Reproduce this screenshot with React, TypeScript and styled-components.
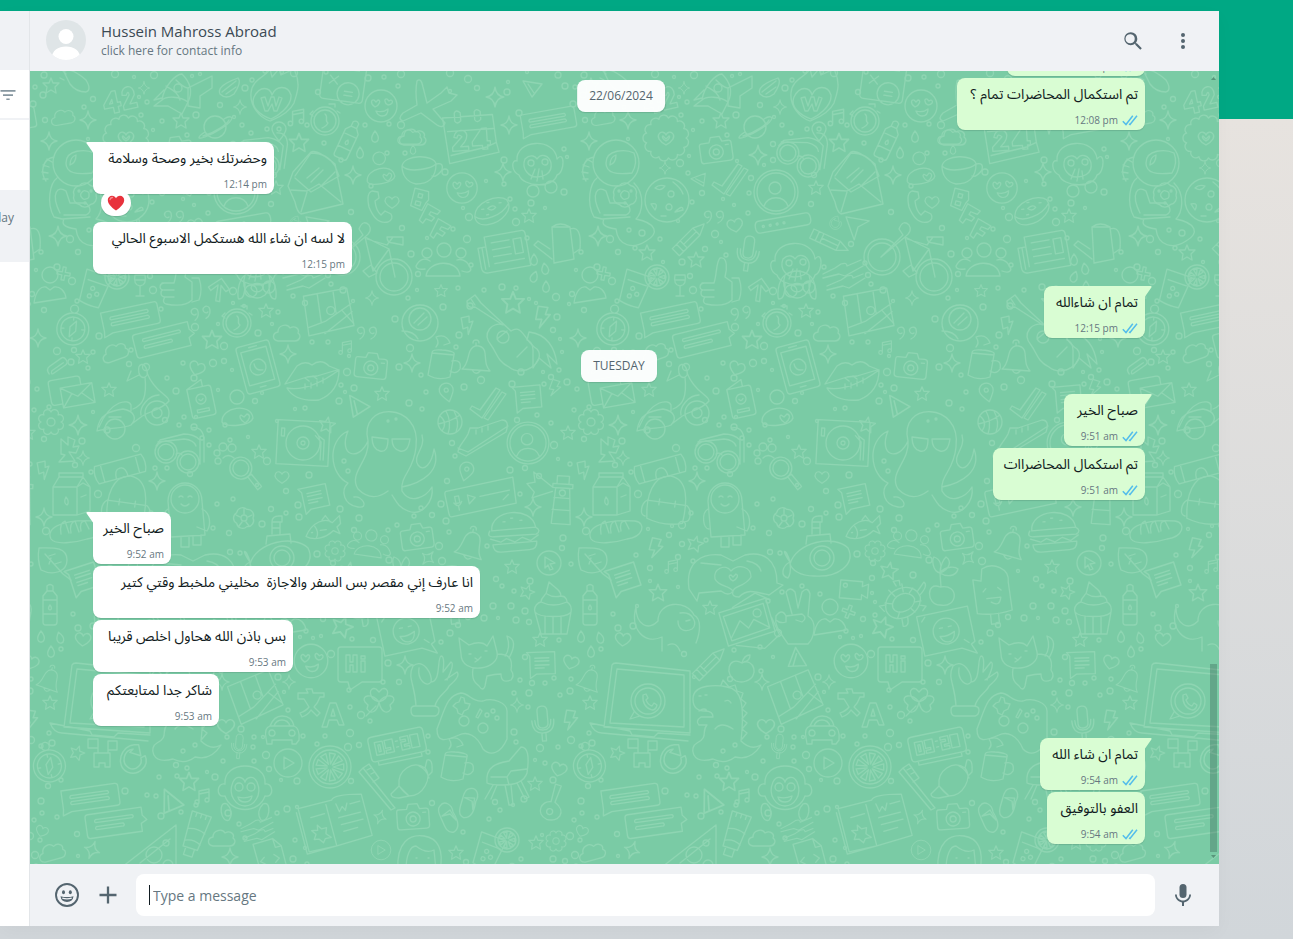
import React from "react";
import styled, { createGlobalStyle } from "styled-components";

/* ---------- wallpaper doodles ---------- */

const circle = (x: number, y: number, r: number) =>
  `M${x - r} ${y}a${r} ${r} 0 1 0 ${2 * r} 0a${r} ${r} 0 1 0 ${-2 * r} 0`;

const rays = (n: number, a: number, b: number) =>
  Array.from({ length: n }, (_, i) => {
    const t = (i * 2 * Math.PI) / n;
    const w = 0.22;
    const p = (r: number, o: number) =>
      `${(r * Math.cos(t + o)).toFixed(1)} ${(r * Math.sin(t + o)).toFixed(1)}`;
    return `M${p(a, 0)}L${p(b, -w)}L${p(b, w)}Z`;
  }).join("");

const scallop = (n: number, r: number, bump: number) => {
  const p = (i: number) => {
    const t = (i * 2 * Math.PI) / n;
    return `${(r * Math.cos(t)).toFixed(1)} ${(r * Math.sin(t)).toFixed(1)}`;
  };
  let d = `M${p(0)}`;
  for (let i = 1; i <= n; i++) d += `A${bump} ${bump} 0 0 1 ${p(i)}`;
  return d + "Z";
};

const shapes: Record<string, { r: number; d: string }> = {
  star: { r: 9, d: "M0-8L2-3L8-3L4 1L5 7L0 4L-5 7L-4 1L-8-3L-2-3Z" },
  spark: { r: 9, d: "M0-9Q1-1 8 0Q1 1 0 9Q-1 1-8 0Q-1-1 0-9Z" },
  plus: { r: 7, d: "M-1-7h3v5h5v3h-5v5h-3v-5h-5v-3h5Z" },
  heart: { r: 8, d: "M0 7C-7 3-9-1-7-4C-5-7-1-6 0-3C1-6 5-7 7-4C9-1 7 3 0 7Z" },
  cloud: { r: 13, d: "M-9 8C-15 7-15 0-9-1C-9-8 0-10 3-5C8-8 13-4 11 0C15 3 12 8 8 8Z" },
  drop: { r: 5, d: "M0-6C4-1 4 1 3 3C2 6-2 6-3 3C-4 1-3-2 0-6Z" },
  bolt: { r: 9, d: "M-4-9L4-8L2-2L6-2L-3 9L-1 2L-6 2Z" },
  pin: { r: 8, d: "M0 9C-5 3-7 0-7-3A7 7 0 0 1 7-3C7 0 5 3 0 9Z" + circle(0, -3, 2) },
  music: { r: 8, d: "M-4 5V-6L6-8V3M-4-3L6-5" + circle(-6, 5, 2) + circle(4, 3, 2) },
  quotes: { r: 11, d: "M-8 6C-4 4-3-1-4-4C-6-8-12-5-10-1C-8 2-6 0-6 0M3 6C8 4 9-1 8-4C6-8 0-5 2-1C4 2 6 0 6 0" },
  slice: { r: 10, d: "M-9-7L10-4L0 9ZM-4-4L2 5" },
  arrow: { r: 11, d: "M-10-1L1-12L11-3L8 0L2-5L4 11L0 11L-1-5L-7 2Z" },
  gear: { r: 12, d: scallop(8, 10, 3) + circle(0, 0, 4) },
  badge: { r: 23, d: scallop(13, 20, 5) + "M0 7C-7 3-9-1-7-4C-5-7-1-6 0-3C1-6 5-7 7-4C9-1 7 3 0 7ZM0 3C-4 1-4-2-3-2L0 1L3-2C4-2 4 1 0 3Z" },
  flower: { r: 17, d: scallop(5, 9, 6) + circle(0, 0, 3) + "M0-9V-4M8-3L4-1M5 8L2 4M-5 8L-2 4M-8-3L-4-1" },
  clover: { r: 18, d: "M0 0C-12-4-10-16-3-13L0-10L3-13C10-16 12-4 0 0C8-10 18-6 14 0L11 3L12 7C8 13 2 10 0 0C-2 10-8 13-12 7L-11 3L-14 0C-18-6-8-10 0 0M-3 4L-13 14" },
  citrus: { r: 23, d: circle(0, 0, 21) + circle(0, 0, 17) + rays(9, 3, 14) },
  lemon: { r: 14, d: circle(0, 0, 12) + circle(0, 0, 9) + rays(7, 2, 8) },
  emoji: { r: 18, d: circle(0, 0, 16) + "M-6 1C-11-2-10-7-7-6L-5-4L-3-6C0-6-1-1-6 1ZM7-1C3-3 3-8 6-7L8-5L10-6C13-5 11-1 7-1ZM-5 5Q2 7 7 3Q7 10 1 10Q-3 10-5 5Z" },
  profile: { r: 24, d: circle(0, 0, 22) + circle(0, 0, 19) + circle(-1, -4, 6) + "M-12 14C-8 3 8 3 12 14" },
  play: { r: 16, d: circle(0, 0, 14) + "M-4-6L6 0L-4 6Z" },
  cursor: { r: 14, d: circle(0, 0, 12) + "M-4-6L6 0L1 1L4 6L1 7L-1 2L-4 5Z" },
  ball: { r: 14, d: circle(0, 0, 12) + "M-12 2Q0 0 10-7M-4-11Q2 0-2 12M4-11Q10 0 6 10M-10-6Q-2 0-8 9" },
  dogface: { r: 22, d: "M-12-10Q0-18 12-10Q16 2 8 10Q0 16-8 10Q-16 2-12-10ZM-12-10C-20-4-20 14-18 14C-12 14-12 4-12-2M12-10C20-4 20 14 18 14C12 14 12 4 12-2M-6 3C-5-3 5-3 6 3C4 8-4 8-6 3Z" },
  compass: { r: 18, d: circle(0, 2, 16) + circle(0, 2, 12) + circle(0, -18, 4) + "M3-6L3 4L-3 10L-3 0ZM0-10V-7M0 14V11M-12 2H-9M12 2H9" },
  watch: { r: 17, d: circle(0, 0, 14) + circle(0, 0, 11) + "M0-7C4-4-1 0 3 2C1 6-1 6-3 7M-12-10L-15-7L-12-5M12-10L15-8M4-17h6v3" },
  chat: { r: 30, d: "M-28-10H26Q29-10 29-7V9Q29 12 26 12H-20L-29 15L-28 9ZM-19-4H18Q20-2 18-1H-19Q-21-2-19-4ZM-19 2H18Q20 4 18 5H-19Q-21 4-19 2Z" },
  chat2: { r: 30, d: "M28-12H-26Q-29-12-29-9V9Q-29 12-26 12H26L26 4L32 1L28-4ZM-19-6H18Q20-4 18-3H-19Q-21-4-19-6ZM-19 1H8Q10 3 8 4H-19Q-21 3-19 1Z" },
  note: { r: 16, d: "M-15-12L13-12V10L-6 10L-12 14L-12-8ZM-7-6H7M-7-3H7M-7 1H7M-7 4H2" },
  camera: { r: 18, d: "M-14-8H-6L-4-13H5L7-8H13Q16-8 16-5V9Q16 12 13 12H-13Q-16 12-16 9V-5Q-16-8-14-8Z" + circle(0, 2, 7) + circle(0, 2, 3) + "M10-4H13" },
  video: { r: 16, d: "M-14-9H8V-4L14-7V7L8 4V9H-14Z" + circle(-9, -4, 2) },
  pencil: { r: 18, d: "M-20-5H9L20 0L9 5H-20ZM-14-5V5M-9-5V5M9-5V5M-9 0H9" },
  mic: { r: 16, d: "M-5-12Q-5-17 0-17Q5-17 5-12V0Q5 5 0 5Q-5 5-5 0ZM-11-3Q-11 10 0 10Q11 10 11-3M-8-3Q-8 7 0 7M8-3Q8 7 0 7M-2 10V18H2V10" },
  thumb: { r: 24, d: "M-18 1H-6C-3-8-4-20 0-24C8-26 7-12 5-5L12 0V18C6 24-4 24-14 22C-19 20-15 15-15 15C-21 14-19 8-17 8C-22 7-20 1-16 1M-16 8H-6M-15 15H-6M12-4H19Q23 8 19 18L12 20" },
  drink: { r: 22, d: "M-12-16L14-12L6 20Q-4 20-14 16ZM-9-6L10-3" + circle(-3, 2, 2) + circle(2, 7, 2) + circle(-5, 10, 2) },
  wine: { r: 10, d: "M-5-10H5Q7 0 0 1Q-7 0-5-10ZM0 1V11M-4 11H4M-5-5H5" },
  person: { r: 18, d: circle(0, -12, 8) + "M-16 16C-14 2-8-1-4 0L0 3L4 0C10-1 15 4 16 11Z" },
  lover: { r: 18, d: circle(0, -13, 7) + "M-15 12C-16-3 14-8 16 8C14 16-12 18-15 12ZM8 13C3 10 2 6 4 5L7 7L10 4C14 5 13 10 8 13Z" },
  people: { r: 26, d: circle(0, -12, 7) + circle(-17, -9, 5) + circle(17, -9, 5) + "M-18 14C-16-2 14-4 16 14ZM-19 7C-26 8-28 6-28 4C-24-4-18-4-14-1M18 9C26 12 28 8 26 5C22-3 16-3 13-2" },
  planet: { r: 16, d: circle(0, 0, 11) + "M-10 5C-18 10-18 13-10 10C0 6 16-3 17-9C15-12 9-8 9-8M-12 9C0 6 12-3 14-7" },
  rocket: { r: 20, d: "M-10 8C-8-6 4-18 10-18C20-8 20 2 16 10C8 4-6 4-10 8ZM-8-2L-18 8L-10 6M4-12Q12-4 16-4M-6-6C0-2 6 0 8 8" + circle(6, -4, 4) + "M-10 8L-18 14H-4L10 22L16 10" },
  flame: { r: 26, d: "M-23-8C-22-22-8-24-4-32L-2-24L5-32L7-26L20-32C28-16 22-6 20 2C14 14 0 18-4 20C-16 16-24 4-23-8ZM-20-4C-14-16-4-14-2-6C2-16 14-16 17-6C18 6 2 16-3 18C-14 14-24 6-20-4Z" },
  w: { r: 8, d: "M-10-6L-6-7L-3 2L0-7H3L5 2L8-7L11-6L6 7H3L1 0L-3 7H-6Z" },
  astro: { r: 46, d: circle(0, -20, 23) + "M-10-20C-10-34 10-34 18-30Q22-20 16-10C0-8-10-10-10-20ZM-6-18Q-6-26 0-28Q0-20-6-18M-19-5C-26 0-30 20-22 34L-14 36L14 34M-16 30C-26 10-18 2-10 8L-6 20H10Q18 28 10 32H-12M18 0C30 12 26 30 20 36C40 40 44 50 30 58C18 66 2 64 0 46C-14 44-14 40-12 36M-22-26C-34-24-36-10-30-2M-29-24L-24-21M-33-18L-27-16M-34-11L-28-10M-33-4L-28-4" },
  control: { r: 12, d: scallop(6, 11, 7) + scallop(5, 4, 3) + circle(-6, -4, 1) + circle(6, -4, 1) + circle(0, 8, 1) },
  moon: { r: 24, d: circle(0, 0, 22) + "M-12-12Q-8-16-2-14Q-6-8-12-12ZM-16 4Q-8 2-12 10ZM8 12Q16 4 16 10ZM6-18Q14-12 16-6M-6 16H-1" + circle(4, -6, 3) + circle(2, 7, 3) },
  checks: { r: 15, d: "M-16 4L-8 8L8-14L12-12L-6 16L-18 7ZM-4 16L14-10L18-8L0 18Z" },
  calc: { r: 22, d: "M-18-24H18Q21-24 21-20V10Q21 14 17 14H-18Q-22 14-22 10V-20Q-22-24-18-24ZM-14-10L-6-2M-14-2L-6-10M-12-20H-4" + circle(6, 6, 11) + "M2 4H10M2 8H10M6-18H14" },
  bottle: { r: 20, d: "M-3-19Q0-22 3-19V-14L7-9V17Q7 20 4 20H-4Q-7 20-7 17V-9L-3-14ZM-7-5H7M-7 9H7M-3-14H3M0 0Q3 4 0 5Q-3 4 0 0Z" },
  goggles: { r: 22, d: circle(-14, 2, 11) + circle(-14, 2, 8) + circle(8, 12, 11) + circle(8, 12, 8) + "M-4 4Q0 2 2 5M-24-4L-20-10L4-16Q14-16 20-10V14M-22-8L4-11Q14-10 16-4M24 12V-12Q22-24 12-22" },
  letter: { r: 34, d: "M-22-10L-4-30Q2-33 20-18L26 12L28 22L-14 32Q-18 30-20 20L-27 4ZM-20-6L-4-29Q12-29 20-16L24-6L-4 10L-20-4M-24 8L-8 9L4 2L26 20M-8 10L-14 30M20-10L6 4M-8-4L4-14M-4 0L8-12" },
  phone: { r: 18, d: "M-8-16Q-14-14-11 0Q-4 18 8 15Q14 12 11 7L5 4L1 8Q-4 4-5-6L-1-9L-2-15Z" },
  bar: { r: 26, d: "M-24-6H24Q28-6 28 0Q28 6 24 6H-24Q-28 6-28 0Q-28-6-24-6Z" + circle(-20, 0, 1) + circle(-13, 0, 1) + circle(-6, 0, 1) + circle(1, 0, 1) },
  bike: { r: 40, d: circle(-25, 0, 18) + circle(-25, 0, 14) + circle(27, 20, 18) + circle(27, 20, 14) + "M-26 0L-4-22L-8-28Q-4-38 2-32Q6-26-2-20ZM-2-20L6 14L22-8L-2-20M0-18L20-12L26-20M22-8L28 20M20-20H36V-12L26-14Q20-14 20-20M4 8L10 16L2 20L-4 14Z" },
  monkey: { r: 28, d: "M-20-6C-22-30 22-30 20-6C28-8 30 8 20 6C14 24-14 24-20 6C-30 8-28-8-20-6ZM-12-8C-8-16-1-12 0-8C1-12 8-16 12-8C18 6 8 16 0 16C-8 16-18 6-12-8Z" + circle(-6, -3, 4) + circle(6, -3, 4) + "M-7 7Q0 9 7 6Q6 12 0 12Q-6 12-7 7ZM-18 14C-28 10-24 34-16 30C-12 24-14 18-18 14ZM18 14C28 10 24 34 16 30C12 24 14 18 18 14Z" },
  wave: { r: 18, d: "M-20 2L-8-4L-2-8Q4-10 4-6L18-12M-20 6L-4 2L2 4L20-6M-16 14L-2 8L4 4Q10 2 10 6L20 2M-16 18L0 14L6 16L22 6" },
  map: { r: 24, d: "M-22-20L22-22L24 16L-22 20ZM-22 12L-4 8L24-6M-6 20L24 2M14-1L24 14M-8-20V8M8-20V2" + circle(3, -2, 4) },
  mobile: { r: 26, d: "M-14-24H14Q17-24 17-21V21Q17 24 14 24H-14Q-17 24-17 21V-21Q-17-24-14-24ZM-13-18H13V16H-13ZM-4-21H4M-3 20H3" + circle(0, 0, 8) + "M-3-4Q-4 3 4 4" },
  lips: { r: 28, d: "M-28 6L-16-12Q-8-18-1-13Q8-20 16-12L26-8Q26 14 6 22Q-18 24-26 10Q-4 14 26-8M-28 6L-6-1L4-2L24-8M-8 6V11M-2 5V10M4 3V8M10 0V5M-8 0L-4 3M0-2L4 1" },
  clip: { r: 10, d: "M-11 2Q-11-4-6-4H8Q11-4 11 0Q11 4 8 4H-6Q-11 4-7 1H7" },
  mails: { r: 26, d: "M-12-6H20V14H-12ZM-12-6L4 5L20-6M-12 14L-2 2M20 14L8 2M-12 10H-20Q-23 10-23 6V-12Q-23-15-20-15H6Q9-15 9-12V-6" },
  scooter: { r: 36, d: "M-36 28C-34 10-22 8-10 6C2 8 4 16-2 22C-10 26-24 24-36 28ZM-34 24C-22-4-4-4-2 2L-2 8M-24 14H-12M6-30C4-40 12-42 14-32C16-26 8-22 6-30ZM14-30C22-10 36-8 36-2C30 6 12 10 8 14L0 20M12-26C14-6 10 2 0 6M8 12C6 4 16-8 26-8" + circle(24, 10, 12) + circle(24, 10, 5) + circle(-18, 26, 10) + "M6-28L-6-22L-2-32" },
  id: { r: 18, d: "M-11-12H9Q12-12 12-9V15Q12 18 9 18H-9Q-12 18-12 15V-12L4-19V-12M-6 10H6V13H-6Z" + circle(0, 0, 5) + "M-2 0Q0 3 2 0" },
  hour: { r: 12, d: "M-8-10L-1-4V-12L6-9L4-2L10-3L7 4L0 3L6 12L-10 13L-4 6L-8 5Z" },
  roll: { r: 24, d: "M-24-9H24Q28 0 24 9H-24Q-28 0-24-9ZM-18-9V9M18-9V9M-6 9Q-6-1 0-1Q6-1 6 9" },
  pack: { r: 28, d: "M-18 24C-22 2-18-20 0-21C18-20 20 2 18 24Q0 30-18 24ZM-20 6H20M-8 3V9M8 3V9M-20 6C-26 10-26 22-20 22M20 6C26 10 26 22 20 22" },
  milk: { r: 24, d: "M-18 20V-8L-12-18H12L19-8V16L6 20ZM-18-8H6L12-18M6-8V20M6-8L12-12L19-8M-12-18V-22H12V-18M-5 2Q-1 7-4 10Q-8 8-5 2ZM10 2L15 0" },
  bread: { r: 26, d: "M-24 8C-30-4-10-12 20-10C32-8 28 6 12 8C0 12-20 14-24 8ZM-14 3Q-16-8-10-10L-6 2M-4 2Q-6-8 0-10L4 1M6 0Q4-10 10-10L14-2" },
  buddy: { r: 28, d: "M-17-8C-16-32 16-32 17-8L20 26L-14 28ZM-17 0C-24 4-22 20-16 20M17 0C26 4 26 16 22 22L12 18M-4 28L-4 38H4V28M8 28V36H16V26" + circle(0, -10, 14) + "M-6-12Q-4-14-2-12M3-12Q5-14 7-12M-4-5Q0-1 4-5" },
  paw: { r: 12, d: circle(-9, -3, 3) + circle(-3, -9, 4) + circle(6, -8, 4) + circle(-8, 5, 3) + "M-3 2Q2-3 8 2" },
  lens: { r: 20, d: circle(-2, -2, 11) + circle(-2, -2, 8) + "M4 7L8 5L17 18L13 21Z" },
  record: { r: 30, d: "M-26-22H26V22H-26Z" + circle(0, 0, 17) + circle(0, 0, 6) + circle(0, 0, 2) + "M12-8L18-2V16M15-8L21-4V16M-22-14H-19V-6H-22Z" },
  squid: { r: 62, d: "M-14-20C-24-60 40-60 34-14C32 10 18 14 20 30C28 44 44 36 50 26C52 40 40 56 26 50C16 46 14 40 10 34M-14-20C-12 0-34 12-24 28C-12 40-2 36 6 30M-14-20C-24 2-44-6-34-30C-56-20-52 14-34 22C-42 30-38 44-24 46C-12 48-20 34-28 36M20 26C40 22 60 10 52-12C50 2 42 12 36 4C30-6 44-12 40-26M-10-24L6-22Q6-8-2-10Q-10-12-10-24ZM10-22L28-22Q26-8 18-10Q10-12 10-22Z" + circle(6, -40, 1) + circle(14, -42, 1) + circle(-38, 0, 2) + circle(-34, 10, 2) },
  fish: { r: 18, d: "M-18 6C-10-8 4-10 10-4L18-10V-2L14 1L16 8L10 4C2 10-10 12-18 6ZM-8-3Q-4 4-8 9M-12 3H-11M0-8L4-12L8-5M-3 2H3" },
  sub: { r: 36, d: "M-30 8C-24-14 14-22 28-8C36 8 18 22-6 20C-20 20-28 14-30 8ZM-14-12L-13-20L10-22L11-13M-8-22V-34Q-8-40-1-40H2V-34H0V-22M-8-34H2M-8-28H0M-30 6C-40-8-34-8-30 6C-38 10-40 20-32 22C-28 16-30 10-30 6" + circle(2, 2, 12) + circle(2, 2, 8) },
  pointer: { r: 14, d: "M-10-12L12-4L0 0L-6 12Z" },
  shoe: { r: 24, d: "M-24 14C-24 8-18 4-14-4L-12-10L-4-10L20-18Q28-18 24-6L-16 18ZM-24 10L-14 14L26-12M-6-8V-4M0-10V-6M6-12V-8" },
  audio: { r: 36, d: "M-34-12H34L32 14H-34Q-36 14-36 10V-8Q-36-12-34-12ZM-14-4L-7 0L-14 5ZM-2 0H28M-27-5H-23V2H-27ZM-29 1Q-25 8-21 1M-25 5V9M20 8L26 4" },
  tower: { r: 28, d: "M-7-10H7L10 26H-9ZM-10-14H10V-10H-10ZM-6-14V-22H6V-14M-8 0H8M-9 12H9M-10-10L-30-24L-28-14L-36-12L-28-4L-30 2L-10-6" + circle(0, -5, 3) },
  bell: { r: 16, d: "M-14 10C-8 6-8-4-6-8C-2-16 8-14 9-6C10 2 9 6 14 12ZM-4 11Q0 17 4 12M0-13V-16M3-16Q3-19 0-19Q-3-19-3-16" },
  burger: { r: 26, d: "M-22-4C-22-26 20-26 22-4ZM-24-4Q-28 2-20 2L22 3Q28 0 22-4M-24 4L-14 8L-8 5L0 9L8 5L16 9L24 4M-22 10Q-22 18-14 18H14Q22 18 22 10ZM-10-12H-8M-2-15H0M7-12H9" },
  cupcake: { r: 24, d: "M-18 2L-12 24H14L18 2C14 8-14 8-18 2C-20-4-14-8-12-8C-12-14-6-14-6-20L-4-28C2-22 8-20 8-14C14-14 14-8 14-8C20-4 18 0 18 2M-12-8Q0-2 14-8M-6-16Q0-12 8-14M-8 7V24M0 7V24M8 7V24" },
  leaf: { r: 18, d: "M-14-12C-2-12 14-14 14 0C14 12 0 16-12 10Q-16 0-14-12ZM-8-6L10 14L18 20M-2-2L-4 4M2 4L8 2M-4-4L2-6" },
  elephant: { r: 30, d: "M-34-14C-34 4-22 10-12 0C-12-20 16-22 24-6C32-2 30 12 26 22M-34-14C-40 8-26 24-8 16V30M10-8C24-10 28 4 22 8C14 12 8 8 8 0M16 0L20-1M10 30Q6 20-2 24" },
  hands: { r: 44, d: "M-44 12C-48-16-30-24-12-22L0-16L12-22C30-26 44-18 44 6L50 8L36 18C20 14 14 12 6 20Q-2 20 0 14Q-4 20-12 14L-34 16L-36 24ZM-18 2C-20-8-8-14-2-6C6-14 18-10 18 0C12 10 2 8 0 14C-4 8-14 10-18 2ZM0 4C-4 2-5-2-2-2L0 0L3-3C6-2 4 2 0 4ZM-32-14L-12-12M14-16Q26-14 28-6" },
  photo: { r: 28, d: "M-28-12L20-22L26 12L-22 22ZM-24-8L17-17L21 8L-18 17ZM-18 14L-8-2L0 6L6-2L20 7" + circle(10, -8, 4) + "M-14 22L14 28L30 16L24-2M-14-16L10-28L24-20" },
  turtle: { r: 26, d: "M-18 6C-20-16 14-22 18-2C16 18-14 22-18 6ZM-11 4C-12-9 9-13 12-1C10 11-9 13-11 4ZM16-8L24-16Q28-12 18-4M-4-17L-6-22H0V-17M-17 0L-24 0L-20 6M16 6L22 8L18 12M-4 17V24Q2 26 2 16M-18-2L-11 0M-12-14L-7-7M2-18L2-10M12-12L8-8M18 2L12 2M10 12L7 8M-8 15L-5 9" },
  peace: { r: 26, d: "M-8 0L-14-22Q-10-28-5-22L-2-6L2-22Q8-28 10-20L8 2C18 8 14 24 8 30H-12C-20 18-26 12-24 2Q-18-6-14 2L-14 8Q-20 10-24 6M-14 2L2 0Q8 4 2 8L-4 6" },
  plant: { r: 24, d: "M-2 6C-16 0-16 24-2 24C16 28 18 2-2 6ZM-1 6L-2-8C-10-10-10-22-8-24C-2-22 0-16-2-8C-2-16 2-22 4-24C10-20 8-12-2-8C4-16 14-14 16-12C14-4 4-4-2-8" },
  ice: { r: 26, d: "M-17 22L-18-12L-10-10L-8-22C4-28 20-20 17-6L18 22Q0 26-17 22ZM-6-2L-9 1M6-2L9 1M-6 8H8Q6 18-2 12M-4 24V34H4V24" },
  bubble: { r: 32, d: "M-26-24H26V12L22 14L26 24L12 16H-26Z" + circle(0, -4, 13) + "M-6-8H-3M3-8H6M-7 0Q0 2 8-2Q6 8 0 7Q-6 6-7 0ZM-22-18L-18-22M16 8L20 12" },
  hi: { r: 24, d: "M-19-20H19Q22-20 22-17V12Q22 15 19 15H2L-10 23L-12 15H-19Q-22 15-22 12V-17Q-22-20-19-20ZM-14-12H-10V-5H-7V-12H-3V5H-7V-2H-10V5H-14ZM1-6H5V5H1ZM1-11H5V-8H1Z" },
  ok: { r: 34, d: "M-20 18H-2Q4 18 4 22Q4 27 0 28H-20Q-24 28-24 22Q-24 18-20 18ZM-19 18C-20-4-28-10-22-22C-12-30-2-14-4-6C-8 0-18-8-16-20M-4-6C6-6 2-30 6-32Q10-32 8-16M8-16L16-26Q20-24 12-8M10-8L22-16Q26-12 14-2C12 4 2 8 0 18" },
  cat: { r: 38, d: "M-26-6L-28-22L-18-15Q-6-20 0-14L6-24L10-8C14 10-26 16-26-6ZM-14 8C-16 22-10 24-8 26Q-4 32-2 26L0 16Q8 14 14 14Q14 24 24 20Q28 16 24 10C26-2 22-6 10-6M22-2Q32-20 20-24Q24-12 18-4M-18-6H-16M-2-9H0M-12-2L-9 0L-6-3M-12 2L-9 0" },
  lang: { r: 26, d: "M-22-14H-12L-14-18H-8L-7-14H4V-10H0Q-2-4-6 0L0 6L-3 9L-9 3Q-12 8-18 10L-20 6Q-14 4-11 0L-16-8H-22ZM2 20L10-4H16L24 18H19L17 13H9L7 20ZM11 9H15L13 2Z" },
  car: { r: 20, d: "M-16 8Q-18-2-12-4Q-8-14 0-14Q10-14 12-4Q18-2 17 10L14 14H10V10H-10V14H-15ZM-12-4H12M-8-4Q-6-10 0-10Q6-10 8-4" + circle(-10, 3, 3) + circle(10, 3, 3) },
  clock: { r: 30, d: "M-24-12H24Q28-12 28-8V9Q28 13 24 13H-24Q-28 13-28 9V-8Q-28-12-24-12ZM-22 13V17H22V13M-22-6H-14V7H-22ZM-19-3H-17V4H-19ZM-12-6H-4V7H-12V4H-7V2H-12ZM4-6H12V2H7V4H12V7H4V-1H9V-3H4ZM14-6H22V7H14ZM-1-3H1M-1 3H1" },
  pad: { r: 42, d: "M-36 6C-28-14-26-28-12-30C-4-30 0-20 10-22C20-26 34-20 34-12L34 16C28 30 18 34 10 26C4 12-6 8-14 12C-28 18-36 20-36 6ZM-12-26L-9-25L-8-20L-3-19L-5-14L-9-12L-11-8L-15-10L-16-14L-20-17L-17-20L-14-21Z" + circle(-9, -2, 5) + circle(10, 5, 5) + circle(14, -8, 2) + circle(20, -12, 2) + circle(24, -5, 2) + "M3-6L7-14L9-12L5-5Z" },
  laptop: { r: 60, d: "M-36 26L-28-36Q-27-38-24-38L50-30V32ZM-30 22L-23-32L44-26V26ZM-50 22L-10 30L-8 34L14 36L18 32L50 34M-50 22Q-46 32-38 32L48 40" + circle(8, 0, 17) + circle(8, 0, 13) + "M3-6L6-7L8-3L6-1Q8 4 12 5L14 2L17 4Q16 9 12 9Q2 6 3-6ZM-6 11L-10 18L0 15" },
  croissant: { r: 26, d: "M-14 8C-16-8 0-18 12-10C20 0 10 18-4 18ZM-14 8L-22 16Q-22 20-14 20L-4 18M12-10L14-18Q20-20 19-6L15-2M-14 8Q-10 14-4 18M6-12Q14-8 16 0" },
  mug: { r: 20, d: "M-10-10L12-8L8 14Q-4 18-14 12ZM-10-10Q-10-14 0-13Q14-12 12-8M10-2Q20-4 18 6Q14 12 8 8M-6-16Q-2-20-6-26Q4-30 8-20L2-18" },
  chair: { r: 30, d: "M-20 10C-22-8-8-10 2-12L14-26Q24-26 20 0Q16 12-4 12Q-16 12-20 10ZM-16 4H0L4-2L20-4M0 4L2 12M-14 12L-22 26M-10 12L-16 26M-2 12L2 32H6L4 12M10 10L18 26L22 24L14 8" },
  creeper: { r: 20, d: "M-14-14H-4V-5H-14ZM6-12H15V-3H6ZM-4-5V0H6V-3M-6 0H8V14H3V10H-3V14H-8V0Z" },
  book: { r: 42, d: "M-36-14L-2-20Q0-26 28-24L36 18L0 26L-28 30ZM-38-10L-30 32L0 26L-8-16M-24-4L-10-7M2-16L5-8L8-13L11-9L13-16M16-15L26-17M4-2L26-6M6 5L28 1M8 12L22 9M-18 4L-14 8L-9 7L-10 13L-5 17L-11 18L-13 22L-17 18L-22 18L-20 13L-24 9L-18 9Z" },
  brush: { r: 24, d: "M-18-18L-14-22L18 18L14 20ZM-14-22L-8-26L2-12L-4-8M-10-20L-6-22M-6-16L-2-18" },
  flip: { r: 16, d: "M-8-12C-4-18 4-14 5-6C10 2 12 10 6 14C-2 16-4 6-7 0C-10-6-10-10-8-12ZM-6-2L2-8L8 2L2-4Z" },
  banjo: { r: 20, d: "M0-18L6-17L2 0C16 8 8 20-4 18C-16 14-12 0-2 0Z" + circle(-2, 10, 3) },
  girl: { r: 30, d: "M-22 20C-24-8-10-16 4-14C18-12 24 0 20 20M-14 20C-14 6-10-4-4-4Q6 4 14 0L16 20M-4 8H-3M8 8H9" },
  apple: { r: 14, d: "M0-6C-14-14-18 6-6 12Q0 14 4 12C18 8 12-12 0-6ZM0-6Q2-14 8-14Q8-8 2-7" },
  dino: { r: 44, d: "M-32-24C-32-40-6-38 2-36C16-34 20-20 16 18Q26 28 36 22Q26 38 10 34Q0 42-12 36C-34 42-36 24-28 20C-16 14-24 8-18 2H-26Q-30-2-24-6H-12Q-12-12-20-12Q-32-12-32-24ZM-26-12Q-20-16-18-12M-4-38L-2-43L4-36L10-38L12-32L18-30L16-24L21-20L17-14L22-10L17-4L22 0L17 6L22 10L17 16M-10 6Q-4-2 8 6M-26-27H-24M-20-28H-18M0-22Q4-24 6-20" + circle(10, 22, 2) + circle(-2, 28, 2) },
  refresh: { r: 16, d: "M6-13L8-3L-2-6L1-9C-8-8-10 4-3 8C4 12 10 4 8-1L12-3C16 6 6 16-4 12C-16 6-10-12 2-13Z" },
  tube: { r: 26, d: "M-10-22H10L7 14H-8ZM-5 14V22H4V14M-9-4Q0-8 9-4M-8 8Q0 4 8 8M-5-22V-18M0-22V-18M5-22V-18" },
  pizza: { r: 32, d: "M-28 20L26-22L26 26ZM-10 16L20-8" + circle(4, 8, 8) + circle(18, 18, 5) + circle(16, -4, 3) },
  file: { r: 22, d: "M-14-12L6-16L14-8L18 16L-8 20ZM6-16L8-7L14-8M-4 2L-8 6L-3 9M6 0L11 4L7 8" },
  plane: { r: 26, d: "M-8-26Q-4-30-2-20L2-4L16-14L22-20L24-14L32-12L26-6L8 2L20 16Q18 22 12 18L-4 6L-22 14Q-28 12-22 6L-8-2Q-10-16-8-26Z" },
  cal: { r: 36, d: "M-28-22H22L24 6L26 16L-24 24ZM-24-8H22M-16-26Q-14-30-10-26V-18Q-14-14-16-18ZM4-26Q6-30 10-26V-18Q6-14 4-18ZM24 6L14 10L-22 16M-18-2Q-16-10-8-8Q-2-4-8 4L-12 8L-4 8V12L-20 12V8L-10-2Q-14-6-15-1ZM10-9H15V4H18V8H15V12H10V8H0V4Z" },
  cup: { r: 22, d: "M-18-4C-16-16 14-16 16-6C16 8 8 14-4 14C-14 12-18 4-18-4ZM-18-4C-10 4 12-2 16-6M16-6Q24-8 22 0Q16 8 12 6" },
  hearmonkey: { r: 28, d: "M-20-6C-22-28 18-30 20-8C28-18 28 6 20 8C16 22-14 20-18 8C-26 4-26-8-20-6ZM-12-8C-6-14-1-10 0-8C4-14 12-12 14-4C16 8 4 10 0 10C-8 10-16 2-12-8Z" + circle(-6, -4, 3) + circle(8, -5, 3) + "M-6 12L-2 2M0 14L2 2M6 12L5 4" + circle(-4, 24, 6) + circle(14, 20, 6) },
  bff: { r: 28, d: "M-22-18L-8-18L-6-10L-8-6L-10 2L-22 0ZM-17-14H-13V-10H-17ZM-18-6H-13V-2H-18ZM-6-6L8-2L6 2L-1 1L-2 4L4 6L2 10L-4 9L-6 14L-10 12ZM8 6L22 10L20 14L13 13L12 16L18 18L16 22L10 20L8 26L4 24Z" },
  donut: { r: 20, d: "M-18 4C-16-10 8-16 16-8C22 2 8 14-6 14C-14 14-18 10-18 4ZM-18 4C-10 12 10 6 17-4M-4-2Q2-6 4-2Q0 2-4-2ZM-10-2H-8M-4-8H-2M8-6H10M-6 4H-4" },
  news: { r: 28, d: "M-16-18H22Q25-18 25-14V18H-18Q-24 18-24 12V-8H-16ZM-16-18V12M-20-8V14M-10-11H8M-10-4H8M-10 3H8M-10 10H20M12-11H20V4H12Z" },
  can: { r: 22, d: "M-6-16H12L16 16L-4 20ZM-8 6L-20-2L-24 2L-6 16M-6-16Q2-22 12-16M12-14Q24-18 22 6L16 10" },
  guitar: { r: 42, d: "M-36-32L-28-38L-22-30L8-2C20-10 22 10 34 16C44 28 20 46 6 34C-6 28-6 20-12 12C-22 0-10-12 0-8L-28-26Q-36-24-36-32ZM-32-34L-28-28M24 14L14 24M-6 6L4-2" + circle(0, 4, 6) },
  bird: { r: 16, d: "M-14-18C4-16 12-2 14 14L4 4L8 18L-4 8L-10 18L-10 0Q-10-8-16-10Z" },
  helmet: { r: 22, d: circle(0, 0, 18) + circle(0, -4, 11) + "M-6 0L4-10M-2 2L7-6M-18 8Q-6 8-2 16" },
  numbers: { r: 20, d: "M-6-10L-2-10V2H1V6H-2V12H-7V6H-16V2ZM-7-2V2H-10ZM4-4C4-14 18-14 16-2L10 6H17V11H3V7L11-3Q11-8 8-3Z" },
  ruler: { r: 16, d: "M-12 14V-4L12-16V-4L0 4V16Z" },
  bean: { r: 10, d: "M-10 6Q-14-2 8-10Q12-6 4 6Q-4 12-10 6M-8 4L6-7M-4 6L6-1" },
  pen: { r: 16, d: "M-14-10Q-8-16 8-2Q14 8 8 10Q-2 10-8 2ZM-18-4L-14-2M-16-12L-12-8" },
};

const artwork: [string, number, number, number?, number?][] = [
  ["star", 21, 15], ["pen", 48, 11], ["numbers", 89, 29, -12], ["spark", 114, 17, 0, 0.7], ["rocket", 142, 21],
  ["ruler", 170, 21], ["bean", 200, 17], ["spark", 210, 36, 0, 0.8], ["flame", 244, 30], ["w", 241, 33],
  ["planet", 185, 56], ["star", 151, 50], ["cloud", 33, 46, -10, 0.9], ["spark", 58, 49], ["badge", 96, 67],
  ["camera", 146, 79, -8], ["spark", 188, 84, 0, 1.1], ["astro", 46, 112], ["control", 55, 124], ["moon", 97, 129], ["spark", 19, 70],
  ["spark", 95, 97, 0, 0.7], ["slice", 130, 109, -30, 0.8], ["checks", 160, 107], ["profile", 206, 121],
  ["quotes", 145, 146], ["heart", 165, 154, -10], ["pencil", 120, 167, -45], ["spark", 28, 165, 0, 1.1],
  ["star", 77, 182], ["star", 126, 189], ["mic", 178, 182, 8], ["thumb", 150, 211], ["drink", 66, 216, 10],
  ["lemon", 87, 206], ["wine", 110, 214], ["person", 20, 216], ["plus", 33, 203, 10], ["arrow", 188, 219, 12],
  ["compass", 43, 256, 5], ["chat", 100, 246, -12], ["chat2", 133, 269, -14], ["quotes", 172, 242, -10],
  ["star", 182, 269, 0, 1.2], ["cloud", 85, 281, -20], ["spark", 8, 267],
  ["plane", 395, 36], ["cal", 442, 67, -4], ["cup", 390, 99], ["emoji", 432, 117, 0, 0.95], ["hearmonkey", 507, 96],
  ["chat", 518, 49, -10, 0.95], ["spark", 465, 26, 0, 1.1], ["slice", 502, 17], ["bff", 402, 140, 14], ["donut", 462, 139, -8],
  ["star", 499, 145, 0, 0.9], ["spark", 473, 101], ["spark", 479, 54], ["cloud", 383, 66], ["news", 473, 181, -10],
  ["can", 528, 172], ["people", 414, 191], ["drop", 504, 189], ["drop", 515, 198, -10], ["drop", 504, 206, 20],
  ["drop", 516, 216], ["star", 411, 220, 0, 0.8], ["star", 483, 232, 0, 1.4], ["bolt", 513, 246, 0, 1.2],
  ["guitar", 473, 262], ["bird", 513, 279], ["bolt", 438, 254, -20], ["helmet", 390, 252], ["spark", 382, 292],
  ["mug", 412, 292], ["bell", 446, 288], ["calc", 313, 16, 8], ["emoji", 351, 35], ["music", 267, 47, 0, 1.1],
  ["watch", 295, 50], ["bottle", 318, 69, 25], ["star", 269, 72, 0, 1.2], ["pin", 249, 61], ["goggles", 232, 82, 8],
  ["letter", 285, 111], ["spark", 323, 104], ["lover", 350, 99, -4, 0.9], ["phone", 350, 136], ["heart", 362, 131, 0, 0.9],
  ["star", 246, 117, 0, 0.9], ["bar", 213, 152, -10], ["pencil", 260, 171, 25], ["refresh", 265, 152, 0, 0.5],
  ["pointer", 288, 156, -10], ["bike", 337, 186], ["hearmonkey", 225, 196], ["wave", 273, 201], ["drop", 345, 66],
  ["drop", 330, 82], ["drop", 383, 79, 0, 0.8], ["cloud", 380, 66, 0, 0.9], ["dogface", 227, 214],
  ["star", 236, 240, 0, 0.9], ["watch", 207, 252], ["cloud", 257, 262], ["map", 298, 242, -8], ["mobile", 228, 296, -15],
  ["spark", 258, 283], ["quotes", 338, 262], ["music", 316, 277, 0, 0.9], ["camera", 341, 295, 6], ["lips", 283, 307],
  ["spark", 342, 227, 0, 0.8], ["clip", 27, 295, -35], ["star", 53, 286, 0, 0.9], ["heart", 167, 297, 20],
  ["mails", 43, 321, -10], ["star", 79, 319, 0, 0.9], ["scooter", 103, 332], ["id", 171, 328, -12], ["lover", 207, 339],
  ["gear", 21, 351], ["spark", 48, 354, 0, 1.1], ["goggles", 150, 379], ["hour", 39, 378], ["spark", 53, 387, 0, 0.8],
  ["bolt", 14, 399, -20], ["roll", 90, 398, -15], ["pack", 98, 426, 8], ["milk", 41, 424], ["spark", 127, 410],
  ["spark", 14, 446], ["bread", 45, 460], ["buddy", 155, 438], ["paw", 196, 385], ["lens", 213, 399, -5], ["star", 229, 381, 0, 0.9],
  ["record", 273, 372, 3], ["star", 297, 354, 10], ["slice", 327, 336, 20, 1.2], ["star", 352, 323, 0, 0.9], ["squid", 352, 390],
  ["heart", 252, 406, 0, 0.9], ["note", 285, 427, -12], ["flower", 214, 447], ["fish", 293, 457, -8], ["sub", 250, 485],
  ["gear", 305, 480, 0, 0.8], ["people", 340, 474, 8, 0.8], ["pin", 417, 322, -15], ["checks", 458, 331], ["note", 498, 327, -5],
  ["bolt", 525, 317, 10, 0.9], ["ball", 420, 351], ["shoe", 452, 367], ["profile", 498, 372, 0, 0.95], ["star", 538, 362, 0, 0.9],
  ["pin", 436, 401, 15], ["audio", 452, 425, -12], ["tower", 532, 427, 4], ["spark", 503, 436], ["camera", 387, 466, -8],
  ["bell", 440, 474, 12], ["burger", 484, 462, -5], ["cursor", 519, 492], ["spark", 398, 487, 40, 0.9], ["star", 482, 496, 0, 0.9],
  ["star", 497, 521, 20, 0.9], ["cupcake", 523, 539], ["leaf", 23, 489], ["note", 54, 508, -18, 1.1], ["bottle", 20, 534],
  ["star", 88, 522, 0, 1.1], ["elephant", 100, 550], ["bolt", 86, 477, 5, 1.1], ["star", 125, 473, 15], ["hands", 163, 506],
  ["star", 140, 537, 0, 0.9], ["photo", 178, 551, -6], ["music", 102, 496, 0, 0.9], ["turtle", 333, 531, -10], ["star", 319, 500, 10, 1.1],
  ["video", 284, 519, 5], ["peace", 230, 543], ["person", 260, 548], ["plus", 278, 541, 20], ["plant", 372, 510], ["ice", 422, 519, -6],
  ["star", 312, 556, 20, 1.3], ["emoji", 281, 590, 0, 1.05], ["hi", 330, 596], ["bubble", 377, 564, -12], ["spark", 375, 594],
  ["ok", 405, 617], ["cat", 457, 589], ["star", 510, 569, 0, 0.9], ["note", 512, 593, -2], ["heart", 541, 591, 15], ["drop", 11, 566],
  ["drop", 30, 567, -15], ["drop", 21, 581], ["heart", 53, 568, 5], ["bell", 19, 609, 15, 0.8], ["lang", 290, 636], ["clover", 349, 631],
  ["car", 252, 659], ["play", 258, 692], ["citrus", 300, 696], ["clock", 367, 673, -12], ["pad", 443, 652], ["mic", 513, 652, -5],
  ["bolt", 541, 649, 0, 1.1], ["star", 20, 632, 0, 0.9], ["laptop", 70, 630], ["spark", 487, 634, 0, 0.8], ["croissant", 383, 707],
  ["mug", 425, 694], ["chair", 477, 702], ["compass", 19, 693, -12], ["star", 47, 682, 20, 0.9], ["heart", 529, 698, 15],
  ["creeper", 72, 682], ["book", 305, 749, -4], ["brush", 347, 719], ["camera", 383, 746, -4], ["flip", 418, 747], ["flip", 438, 732, 40],
  ["banjo", 523, 731, 8], ["drink", 460, 779, 12], ["lemon", 477, 769], ["girl", 390, 779], ["star", 426, 782, 0, 0.9],
  ["star", 506, 772, 0, 0.9], ["gear", 526, 770, 0, 0.8], ["heart", 12, 760, 20, 0.8], ["cloud", 22, 781, -15], ["chat", 60, 726, -8],
  ["chat2", 85, 752, -8], ["spark", 62, 779, 20], ["star", 505, 713, 0, 0.9], ["spark", 259, 611, 0, 0.8], ["play", 351, 779, 0, 0.7],
  ["spark", 350, 746, 20, 0.8], ["pencil", 140, 592, -45], ["apple", 172, 598], ["slice", 226, 589, 50, 1.1], ["spark", 192, 611, 0, 0.9],
  ["map", 225, 627, -20], ["dino", 155, 652], ["heart", 196, 655, 0, 1.1], ["mic", 209, 675, 5, 0.7], ["refresh", 102, 688, 0, 1.1],
  ["star", 159, 711, 0, 1.2], ["monkey", 215, 719], ["music", 173, 726], ["slice", 140, 732, 30, 1.3], ["tube", 165, 764, 18],
  ["cloud", 192, 767], ["wave", 227, 756, 0, 0.8], ["pizza", 120, 776], ["file", 238, 784, -5], ["spark", 200, 786],
];

const TILE_W = 540;
const TILE_H = 800;

/* loose bubbles scattered in the gaps between the drawings */
const dots: [number, number, number][] = (() => {
  const out: [number, number, number][] = [];
  let seed = 7;
  const rnd = () => ((seed = (seed * 16807) % 2147483647) / 2147483647);
  for (let i = 0; i < 9000 && out.length < 440; i++) {
    const x = rnd() * TILE_W;
    const y = rnd() * TILE_H;
    const r = [1.5, 2, 2, 2.5, 3, 3.5][Math.floor(rnd() * 6)];
    const near = (px: number, py: number, d: number) => {
      const dx = Math.min(Math.abs(px - x), TILE_W - Math.abs(px - x));
      return dx * dx + (py - y) ** 2 < d * d;
    };
    if (artwork.some(([k, ax, ay, , s = 1]) => near(ax, ay, shapes[k].r * s * 0.92 + r))) continue;
    if (out.some(([ox, oy, or]) => near(ox, oy, or + r + 5))) continue;
    out.push([Math.round(x), Math.round(y), r]);
  }
  return out;
})();

const Canvas = styled.svg`
  position: absolute;
  inset: 0;
  width: 100%;
  height: 100%;
`;

const Wallpaper = () => (
  <Canvas aria-hidden="true">
    <defs>
      <g id="doodles" fill="none" stroke="#8ed5b2" strokeWidth="1.3" strokeLinejoin="round" strokeLinecap="round">
        {artwork.map(([k, x, y, rot = 0, s = 1], i) => (
          <path key={i} d={shapes[k].d} transform={`translate(${x} ${y}) rotate(${rot}) scale(${s})`} />
        ))}
        {dots.map(([x, y, r], i) => (
          <circle key={i} cx={x} cy={y} r={r} />
        ))}
      </g>
      <pattern id="wall" width={TILE_W} height={TILE_H} patternUnits="userSpaceOnUse">
        <use href="#doodles" />
        <use href="#doodles" x={-TILE_W} />
        <use href="#doodles" x={TILE_W} />
      </pattern>
    </defs>
    <rect width="100%" height="100%" fill="url(#wall)" />
  </Canvas>
);

/* ---------- page ---------- */

const Global = createGlobalStyle`
  * { box-sizing: border-box; }
  body {
    margin: 0;
    font-family: "Open Sans", "Noto Sans", "DejaVu Sans", sans-serif;
    background: #d1d6da;
  }
  button { border: 0; padding: 0; background: none; color: #54656f; display: flex; }
`;

const Page = styled.div`
  display: flex;
  min-height: 100vh;
  padding: 11px 74px 13px 0;
  background:
    linear-gradient(#00a884, #00a884) 0 0 / 100% 119px no-repeat,
    linear-gradient(#e7e3df 119px, #d1d6da 100%);
`;

const Shell = styled.div`
  display: flex;
  flex: 1;
  min-width: 0;
  box-shadow: 0 6px 18px rgba(11, 20, 26, 0.03);
`;

const Sidebar = styled.aside`
  display: flex;
  flex-direction: column;
  width: 30px;
  overflow: hidden;
  background: #fff;
  border-right: 1px solid #e3e6e9;
`;

const SideHead = styled.div`
  height: 59px;
  background: #f0f2f5;
`;

const SideFilter = styled.div`
  display: flex;
  align-items: center;
  justify-content: flex-end;
  height: 50px;
  padding: 2px 11px 0 0;
  border-bottom: 2px solid #f0f2f5;
  button { color: #8696a0; }
`;

const SideRow = styled.div<{ $active?: boolean }>`
  display: flex;
  justify-content: flex-end;
  height: ${(p) => (p.$active ? 72 : 70)}px;
  padding: 19px 15px 0 0;
  font-size: 12px;
  line-height: 18px;
  color: #667781;
  background: ${(p) => (p.$active ? "#f0f2f5" : "#fff")};
`;

const Main = styled.main`
  display: flex;
  flex: 1;
  flex-direction: column;
  min-width: 0;
`;

const Header = styled.header`
  display: flex;
  align-items: center;
  height: 60px;
  padding: 0 24px 2px 16px;
  background: #f0f2f5;
`;

const Who = styled.div`
  flex: 1;
  padding: 2px 0 0 15px;
`;

const Name = styled.div`
  font-size: 15px;
  line-height: 20px;
  color: #3b4a54;
`;

const Hint = styled.div`
  font-size: 12px;
  line-height: 20px;
  color: #667781;
`;

const Actions = styled.div`
  display: flex;
  gap: 26px;
  padding-top: 2px;
`;

const Chat = styled.section`
  position: relative;
  display: flex;
  flex: 1;
  background: #7acba5;
`;

const Thread = styled.div`
  position: relative;
  display: flex;
  flex: 1;
  flex-direction: column;
  justify-content: flex-end;
  height: calc(100vh - 146px);
  overflow: hidden;
  padding: 0 63px 20px;
`;

const Bubble = styled.div<{ $out?: boolean; $first?: boolean; $w: number }>`
  position: relative;
  flex: none;
  align-self: ${(p) => (p.$out ? "flex-end" : "flex-start")};
  min-width: ${(p) => p.$w}px;
  height: 52px;
  margin-top: ${(p) => (p.$first ? 12 : 2)}px;
  padding: 6px 7px 0 9px;
  border-radius: 8px;
  background: ${(p) => (p.$out ? "#d9fdd3" : "#fff")};
  box-shadow: 0 1px 1px rgba(11, 20, 26, 0.13);
  ${(p) => p.$first && (p.$out ? "border-top-right-radius: 0;" : "border-top-left-radius: 0;")}
`;

const Tail = styled.svg<{ $out?: boolean }>`
  position: absolute;
  top: 0;
  ${(p) => (p.$out ? "right: -7px;" : "left: -7px;")}
`;

const Text = styled.p`
  margin: 0;
  font-family: "Noto Sans Arabic", "DejaVu Sans", sans-serif;
  font-size: 14px;
  line-height: 22px;
  color: #111b21;
  white-space: pre;
`;

const Meta = styled.div`
  display: flex;
  align-items: center;
  justify-content: flex-end;
  gap: 4px;
  margin-top: 6px;
  font-size: 10px;
  line-height: 16px;
  color: #667781;
`;

const Reaction = styled.span`
  position: absolute;
  left: 8px;
  top: 48px;
  display: flex;
  align-items: center;
  justify-content: center;
  width: 30px;
  height: 26px;
  border-radius: 13px;
  background: #fff;
  box-shadow: 0 1px 1px rgba(11, 20, 26, 0.13);
`;

const Day = styled.div`
  flex: none;
  align-self: center;
  margin-top: 12px;
  padding: 0 12px;
  border-radius: 8px;
  background: rgba(255, 255, 255, 0.96);
  box-shadow: 0 1px 1px rgba(11, 20, 26, 0.13);
  font-size: 12px;
  line-height: 32px;
  color: #54656f;
`;

const StickyDay = styled(Day)`
  position: absolute;
  top: 9px;
  left: calc(50% + 2px);
  margin: 0;
  transform: translateX(-50%);
`;

const Scroll = styled.div`
  position: relative;
  display: flex;
  flex-direction: column;
  align-items: center;
  justify-content: space-between;
  width: 11px;
  padding: 5px 0;
`;

const Thumb = styled.div`
  width: 7px;
  height: 188px;
  margin: auto 0 3px;
  background: rgba(11, 20, 26, 0.2);
`;

const Footer = styled.footer`
  display: flex;
  align-items: center;
  height: 62px;
  padding: 0 24px 0 25px;
  background: #f0f2f5;
`;

const Tools = styled.div`
  display: flex;
  gap: 17px;
  margin-right: 16px;
`;

const Field = styled.label`
  display: flex;
  flex: 1;
  align-items: center;
  height: 42px;
  margin-right: 16px;
  padding: 0 13px;
  border-radius: 8px;
  background: #fff;
`;

const Caret = styled.span`
  width: 1px;
  height: 20px;
  margin-right: 3px;
  background: #111b21;
`;

const Input = styled.input`
  flex: 1;
  min-width: 0;
  padding: 2px 0 0;
  border: 0;
  outline: 0;
  background: none;
  font: 14px/20px "Open Sans", sans-serif;
  color: #3b4a54;
  &::placeholder { color: #667781; opacity: 1; }
`;

const Ticks = () => (
  <svg width="16" height="11" viewBox="0 0 16 11" fill="none" stroke="#53bdeb" strokeWidth="1.5" aria-label="Read">
    <path d="M.8 6.200L4 9.500L10.800 .8M7 8.900L8 9.500L15 .8" />
  </svg>
);

type Msg = { text: string; time: string; w: number; out?: boolean; first?: boolean; heart?: boolean };

const Message = ({ text, time, w, out, first, heart }: Msg) => (
  <Bubble $out={out} $first={first} $w={w} style={heart ? { marginBottom: 26 } : undefined}>
    {first && (
      <Tail $out={out} width="8" height="13" viewBox="0 0 8 13">
        <path d={out ? "M0 0H6.5Q8.500 0 7 2L0 12Z" : "M8 0H1.500Q-.5 0 1 2L8 12Z"} fill={out ? "#d9fdd3" : "#fff"} />
      </Tail>
    )}
    <Text dir="rtl" lang="ar">{text || "\u00a0"}</Text>
    <Meta>
      <span>{time}</span>
      {out && <Ticks />}
    </Meta>
    {heart && (
      <Reaction>
        <svg width="18" height="16" viewBox="0 0 18 16" aria-label="Heart">
          <path d="M9 15.500C4 12 .8 8.500.8 5C.8 2.300 2.800.7 5 .7C6.800.7 8.300 1.700 9 3.200C9.700 1.700 11.200.7 13 .7C15.200.7 17.200 2.300 17.200 5C17.200 8.500 14 12 9 15.500Z" fill="#e8323c" />
          <path d="M3 4.500Q3.500 2.500 5.500 2.500" stroke="#f58a8f" strokeWidth="1.300" fill="none" strokeLinecap="round" />
        </svg>
      </Reaction>
    )}
  </Bubble>
);

const earlier: Msg[] = [
  { text: "", time: "12:08 pm", w: 138, out: true },
  { text: "تم استكمال المحاضرات تمام ؟", time: "12:08 pm", w: 188, out: true },
  { text: "وحضرتك بخير وصحة وسلامة", time: "12:14 pm", w: 181, first: true, heart: true },
  { text: "لا لسه ان شاء الله هستكمل الاسبوع الحالي", time: "12:15 pm", w: 259 },
  { text: "تمام ان شاءالله", time: "12:15 pm", w: 101, out: true, first: true },
];

const tuesday: Msg[] = [
  { text: "صباح الخير", time: "9:51 am", w: 81, out: true, first: true },
  { text: "تم استكمال المحاضراات", time: "9:51 am", w: 152, out: true },
  { text: "صباح الخير", time: "9:52 am", w: 78, first: true },
  { text: "انا عارف إني مقصر بس السفر والاجازة  مخليني ملخبط وقتي كتير", time: "9:52 am", w: 387 },
  { text: "بس باذن الله هحاول اخلص قريبا", time: "9:53 am", w: 200 },
  { text: "شاكر جدا لمتابعتكم", time: "9:53 am", w: 126 },
  { text: "تمام ان شاء الله", time: "9:54 am", w: 105, out: true, first: true },
  { text: "العفو بالتوفيق", time: "9:54 am", w: 98, out: true },
];

export default function App() {
  return (
    <>
      <Global />
      <Page>
        <Shell>
          <Sidebar>
            <SideHead />
            <SideFilter>
              <button aria-label="Filter chats">
                <svg width="20" height="20" viewBox="0 0 24 24" fill="currentColor">
                  <path d="M10 18.100H14V16.100H10ZM3 6.100V8.100H21V6.100ZM6 13.100H18V11.100H6Z" />
                </svg>
              </button>
            </SideFilter>
            <SideRow />
            <SideRow $active>day</SideRow>
          </Sidebar>
          <Main>
            <Header>
              <svg width="40" height="40" viewBox="0 0 40 40" aria-label="Profile picture">
                <clipPath id="face"><circle cx="20" cy="20" r="20" /></clipPath>
                <g clipPath="url(#face)">
                  <rect width="40" height="40" fill="#dfe5e7" />
                  <circle cx="20" cy="16.500" r="7.500" fill="#fff" />
                  <path d="M5 40C6 30 12 26.500 20 26.500S34 30 35 40Z" fill="#fff" />
                </g>
              </svg>
              <Who>
                <Name>Hussein Mahross Abroad</Name>
                <Hint>click here for contact info</Hint>
              </Who>
              <Actions>
                <button aria-label="Search">
                  <svg width="24" height="24" viewBox="0 0 24 24" fill="currentColor">
                    <path d="M15.900 14.300H15L14.700 14C15.700 12.900 16.300 11.400 16.300 9.700A6.500 6.500 0 1 0 9.800 16.200C11.400 16.200 12.900 15.600 14 14.600L14.300 14.900V15.800L19.300 20.800L20.800 19.300ZM9.800 14.300A4.600 4.600 0 1 1 9.800 5.200A4.600 4.600 0 0 1 9.800 14.300Z" />
                  </svg>
                </button>
                <button aria-label="Menu">
                  <svg width="24" height="24" viewBox="0 0 24 24" fill="currentColor">
                    <circle cx="12" cy="6" r="2" /><circle cx="12" cy="12" r="2" /><circle cx="12" cy="18" r="2" />
                  </svg>
                </button>
              </Actions>
            </Header>
            <Chat>
              <Wallpaper />
              <Thread>
                {earlier.map((m, i) => <Message key={i} {...m} />)}
                <Day>TUESDAY</Day>
                {tuesday.map((m, i) => <Message key={i} {...m} />)}
                <StickyDay>22/06/2024</StickyDay>
              </Thread>
              <Scroll aria-hidden="true">
                <svg width="5" height="4" viewBox="0 0 5 4"><path d="M0 4L2.500 1L5 4Z" fill="#58957a" /></svg>
                <Thumb />
                <svg width="5" height="4" viewBox="0 0 5 4"><path d="M0 0L2.500 3L5 0Z" fill="#58957a" /></svg>
              </Scroll>
            </Chat>
            <Footer>
              <Tools>
                <button aria-label="Emoji">
                  <svg width="24" height="24" viewBox="0 0 24 24" fill="none">
                    <circle cx="12" cy="12" r="11" stroke="currentColor" strokeWidth="1.900" />
                    <ellipse cx="8.500" cy="9.300" rx="1.500" ry="2" fill="currentColor" />
                    <ellipse cx="15.300" cy="9.300" rx="1.500" ry="2" fill="currentColor" />
                    <path d="M5.500 13.200Q12 15 18.500 13.200Q17.800 18.900 12 18.900Q6.200 18.900 5.500 13.200Z" fill="currentColor" />
                    <path d="M7.300 15.200Q12 16.500 16.700 15.200" stroke="#f0f2f5" strokeWidth="1.200" />
                  </svg>
                </button>
                <button aria-label="Attach">
                  <svg width="24" height="24" viewBox="0 0 24 24" fill="none" stroke="currentColor" strokeWidth="2.300">
                    <path d="M12 3.500V20.500M3.500 12H20.500" />
                  </svg>
                </button>
              </Tools>
              <Field>
                <Caret />
                <Input type="text" placeholder="Type a message" aria-label="Type a message" />
              </Field>
              <button aria-label="Voice message">
                <svg width="24" height="24" viewBox="0 0 24 24" fill="currentColor">
                  <rect x="8.500" y="1" width="7" height="14" rx="3.500" />
                  <path d="M18.200 11.500C18.200 15 15.300 17.500 12 17.500S5.800 15 5.800 11.500H4C4 15.500 7.200 18.800 11 19.400V23H13V19.400C16.800 18.800 20 15.500 20 11.500Z" />
                </svg>
              </button>
            </Footer>
          </Main>
        </Shell>
      </Page>
    </>
  );
}
